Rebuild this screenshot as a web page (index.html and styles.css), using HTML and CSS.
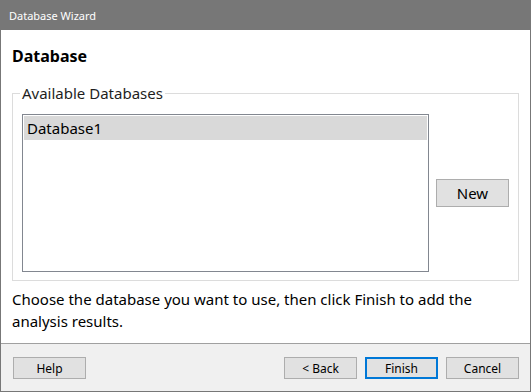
FILE: index.html
```html
<!DOCTYPE html>
<html lang="en">
<head>
  <meta charset="UTF-8">
  <title>Database Wizard</title>
  <link rel="stylesheet" href="styles.css">
</head>
<body>
  <div class="window">
    <div class="titlebar">Database Wizard</div>

    <div class="content">
      <h1>Database</h1>

      <fieldset class="group">
        <legend>Available Databases</legend>
        <ul class="listbox">
          <li class="selected">Database1</li>
        </ul>
        <button class="btn btn-new">New</button>
      </fieldset>

      <p class="hint">Choose the database you want to use, then click Finish to add the analysis results.</p>
    </div>

    <div class="footer">
      <button class="btn">Help</button>
      <div class="nav">
        <button class="btn">&lt; Back</button>
        <button class="btn btn-default">Finish</button>
        <button class="btn">Cancel</button>
      </div>
    </div>
  </div>
</body>
</html>
```

FILE: styles.css
```css
*, *::before, *::after {
  margin: 0;
  padding: 0;
  box-sizing: border-box;
}

body {
  font-family: 'Noto Sans', 'Open Sans', sans-serif;
  background-color: #ffffff;
  color: #000;
}

.window {
  width: 531px;
  height: 392px;
  border: 1px solid #777777;
  display: flex;
  flex-direction: column;
  background-color: #ffffff;
}

/* title bar covers the window's top border */
.titlebar {
  height: 30px;
  margin: -1px -1px 0;
  padding: 1px 0 0 9px;
  background-color: #777777;
  color: #ffffff;
  font-size: 11px;
  line-height: 29px;
}

.content {
  flex: 1;
  padding: 15px 11px 0;
}

h1 {
  font-size: 16px;
  font-weight: 700;
  line-height: 22px;
  margin-bottom: 16px;
}

.group {
  border: 1px solid #dcdcdc;
  display: grid;
  grid-template-columns: 1fr 73px;
  column-gap: 7px;
  align-items: center;
  padding: 11px 9px 8px 9px;
}

.group legend {
  font-size: 15px;
  color: #1e1e1e;
  padding: 0 2px;
  margin-left: -2px;
  line-height: 20px;
}

.listbox {
  list-style: none;
  border: 1px solid #828790;
  height: 158px;
  padding: 1px;
  font-size: 15px;
}

.listbox li {
  height: 24px;
  line-height: 24px;
  padding-left: 3px;
}

.listbox .selected {
  background-color: #d9d9d9;
}

.btn {
  font-family: inherit;
  font-size: 12px;
  color: #000;
  width: 73px;
  height: 22px;
  background-color: #e1e1e1;
  border: 1px solid #adadad;
}

.btn-new {
  height: 28px;
  font-size: 15px;
}

.btn-default {
  border: 2px solid #0078d7;
}

.hint {
  font-size: 15px;
  line-height: 22px;
  margin-top: 7px;
}

.footer {
  height: 48px;
  border-top: 1px solid #a0a0a0;
  background-color: #f0f0f0;
  display: flex;
  justify-content: space-between;
  align-items: flex-start;
  padding: 13px 11px 0 12px;
}

.nav {
  display: flex;
  gap: 8px;
}
```
